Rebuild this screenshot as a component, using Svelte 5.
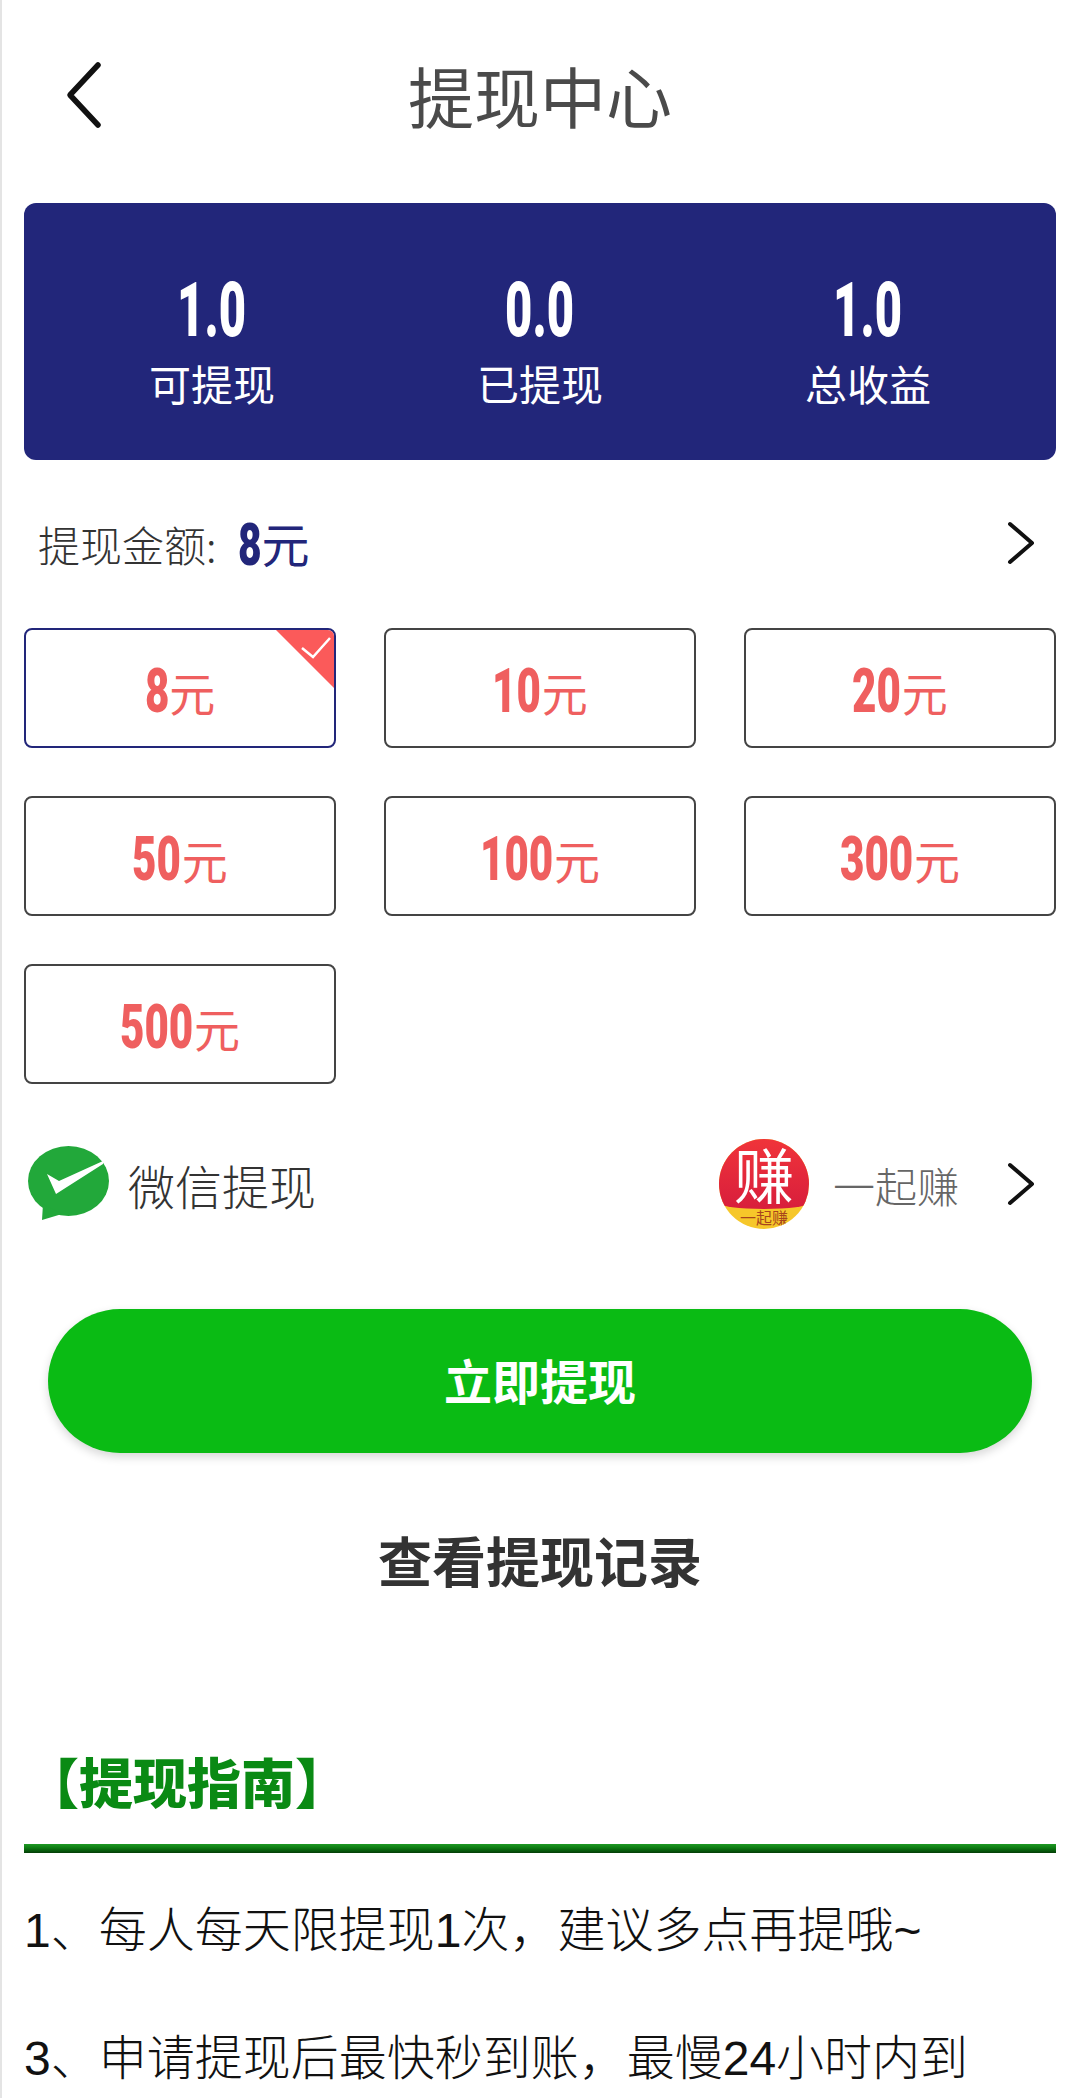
<script lang="ts">
  const stats = [
    { value: '1.0', label: '可提现' },
    { value: '0.0', label: '已提现' },
    { value: '1.0', label: '总收益' }
  ];
  const amounts = [8, 10, 20, 50, 100, 300, 500];
  let selected = $state(8);
</script>

<div class="page">
  <header class="top">
    <svg class="back" viewBox="0 0 40 70" width="40" height="70">
      <path d="M34 5 L6 35 L34 65" fill="none" stroke="#111" stroke-width="5.5" stroke-linecap="round" stroke-linejoin="round" />
    </svg>
    <h1>提现中心</h1>
    <span></span>
  </header>

  <section class="card">
    {#each stats as s}
      <div class="stat">
        <div class="num"><span class="narrow">{s.value}</span></div>
        <div class="lab">{s.label}</div>
      </div>
    {/each}
  </section>

  <div class="amount">
    <span class="amount-lab">提现金额:</span>
    <span class="amount-val"><span class="narrow">8</span>元</span>
    <svg class="chev" viewBox="0 0 28 44" width="28" height="44">
      <path d="M3 3 L25 22 L3 41" fill="none" stroke="#111" stroke-width="4" stroke-linecap="round" stroke-linejoin="round" />
    </svg>
  </div>

  <div class="grid">
    {#each amounts as a}
      <button class="opt" class:on={selected === a} onclick={() => (selected = a)}>
        <span class="narrow" style="margin-right:{-0.182 * String(a).length}em">{a}</span>元
        {#if selected === a}
          <svg class="corner" viewBox="0 0 62 62" width="62" height="62">
            <path d="M0 0 H56 Q62 0 62 6 V62 Z" fill="#fb5a5a" />
            <path d="M28 20 L39 29 L56 10" fill="none" stroke="#fff" stroke-width="2.5" />
          </svg>
        {/if}
      </button>
    {/each}
  </div>

  <div class="pay">
    <svg class="wx" viewBox="0 0 90 80" width="90" height="80">
      <ellipse cx="44.5" cy="37" rx="40.5" ry="35" fill="#22a83a" />
      <path d="M19 60 L18 76 L38 70 Z" fill="#22a83a" />
      <path d="M23 30 L35 37 L79 17 L79 20 L32 50 Z" fill="#fff" />
    </svg>
    <span class="pay-name">微信提现</span>
    <div class="logo">
      <div class="logo-top">赚</div>
      <div class="logo-band">一起赚</div>
    </div>
    <span class="acct">一起赚</span>
    <svg class="chev" viewBox="0 0 28 44" width="28" height="44">
      <path d="M3 3 L25 22 L3 41" fill="none" stroke="#111" stroke-width="4" stroke-linecap="round" stroke-linejoin="round" />
    </svg>
  </div>

  <button class="go">立即提现</button>
  <div class="records">查看提现记录</div>

  <h2>【提现指南】</h2>
  <div class="rule"></div>
  <p class="tip">1、每人每天限提现1次&#65292;建议多点再提哦~</p>
  <p class="tip">3、申请提现后最快秒到账&#65292;最慢24小时内到</p>
</div>

<style>
  :global(body) { margin: 0; background: #fff; }
  .page {
    width: 1080px; height: 2098px; overflow: hidden;
    box-shadow: inset 2px 0 0 #e4e4e4;
    font-family: "Noto Sans CJK SC", "Liberation Sans", sans-serif;
    display: flex; flex-direction: column; background: #fff;
  }
  .top { height: 203px; flex: none; box-sizing: border-box; display: grid; grid-template-columns: 1fr auto 1fr; align-items: start; padding: 60px 64px 0; }
  .top h1 { margin: -6px 0 0; font-size: 66px; font-weight: 400; color: #4a4a4a; line-height: 80px; }
  .back { display: block; }
  .card {
    flex: none; height: 257px; margin: 0 24px; box-sizing: border-box; padding: 62px 24px 0;
    background: #22267a; border-radius: 12px; display: grid; grid-template-columns: repeat(3, 1fr); color: #fff; text-align: center;
  }
  .narrow { display: inline-block; font-family: Roboto, "Liberation Sans", sans-serif; font-weight: 900; transform: scaleX(0.68); transform-origin: left center; }
  .num { font-size: 76px; line-height: 76px; }
  .num .narrow { transform: scaleX(0.62); transform-origin: center; }
  .lab { font-size: 42px; line-height: 44px; margin-top: 13px; }
  .amount { flex: none; height: 60px; margin-top: 53px; padding: 0 45px 0 38px; display: flex; align-items: center; }
  .amount-lab { font-size: 42px; color: #333; font-weight: 300; }
  .amount-val { font-size: 48px; color: #22267a; margin-left: 21px; }
  .amount-val .narrow { font-size: 60px; margin-right: -0.182em; vertical-align: -2px; }
  .amount .chev { margin-left: auto; }
  .grid { flex: none; margin: 55px 24px 0; display: grid; grid-template-columns: repeat(3, 312px); grid-auto-rows: 120px; gap: 48px; }
  .opt {
    position: relative; background: #fff; border: 2px solid #444; border-radius: 8px; padding: 4px 0 0;
    color: #ef5f5f; font-size: 46px; font-family: inherit; overflow: hidden;
  }
  .opt .narrow { font-size: 62px; vertical-align: -1px; }
  .opt.on { border-color: #22267a; }
  .corner { position: absolute; top: -2px; right: -2px; }
  .pay { flex: none; height: 90px; margin-top: 55px; padding: 0 45px 0 24px; display: flex; align-items: center; }
  .wx { flex: none; }
  .pay-name { font-size: 47px; color: #333; font-weight: 300; margin-left: 14px; }
  .logo { width: 90px; height: 90px; border-radius: 50%; overflow: hidden; margin-left: auto; background: #f6c72a; text-align: center; }
  .logo-top { height: 70px; line-height: 68px; font-size: 60px; font-weight: 400; color: #fff; background: linear-gradient(#f0343a, #d81e3c); border-radius: 0 0 50% 50% / 0 0 6px 6px; }
  .logo-band { height: 20px; color: #a8451c; font-size: 16px; line-height: 17px; }
  .acct { font-size: 42px; color: #666; margin-left: 24px; font-weight: 300; margin-right: 48px; }
  .go {
    flex: none; height: 144px; margin: 80px 48px 0; border: 0; border-radius: 72px; background: #0abb14; padding: 0 0 4px;
    color: #fff; font-size: 48px; font-weight: 700; font-family: inherit; box-shadow: 0 4px 10px rgba(0, 0, 0, 0.16);
  }
  .records { flex: none; height: 60px; line-height: 60px; margin-top: 77px; text-align: center; font-size: 54px; font-weight: 700; color: #333; }
  h2 { flex: none; margin: 159px 0 0 25px; height: 64px; line-height: 64px; font-size: 54px; font-weight: 900; color: #0a8a14; }
  .rule { flex: none; margin: 31px 24px 0; height: 9px; background: linear-gradient(#1f9a25, #0c7a12 45%, #033d06); }
  .tip { flex: none; margin: 0 0 0 24px; height: 128px; line-height: 128px; font-size: 48px; color: #111; font-weight: 300; white-space: nowrap; font-family: "Liberation Sans", "Noto Sans CJK SC", sans-serif; }
  .rule + .tip { margin-top: 14px; }
</style>
